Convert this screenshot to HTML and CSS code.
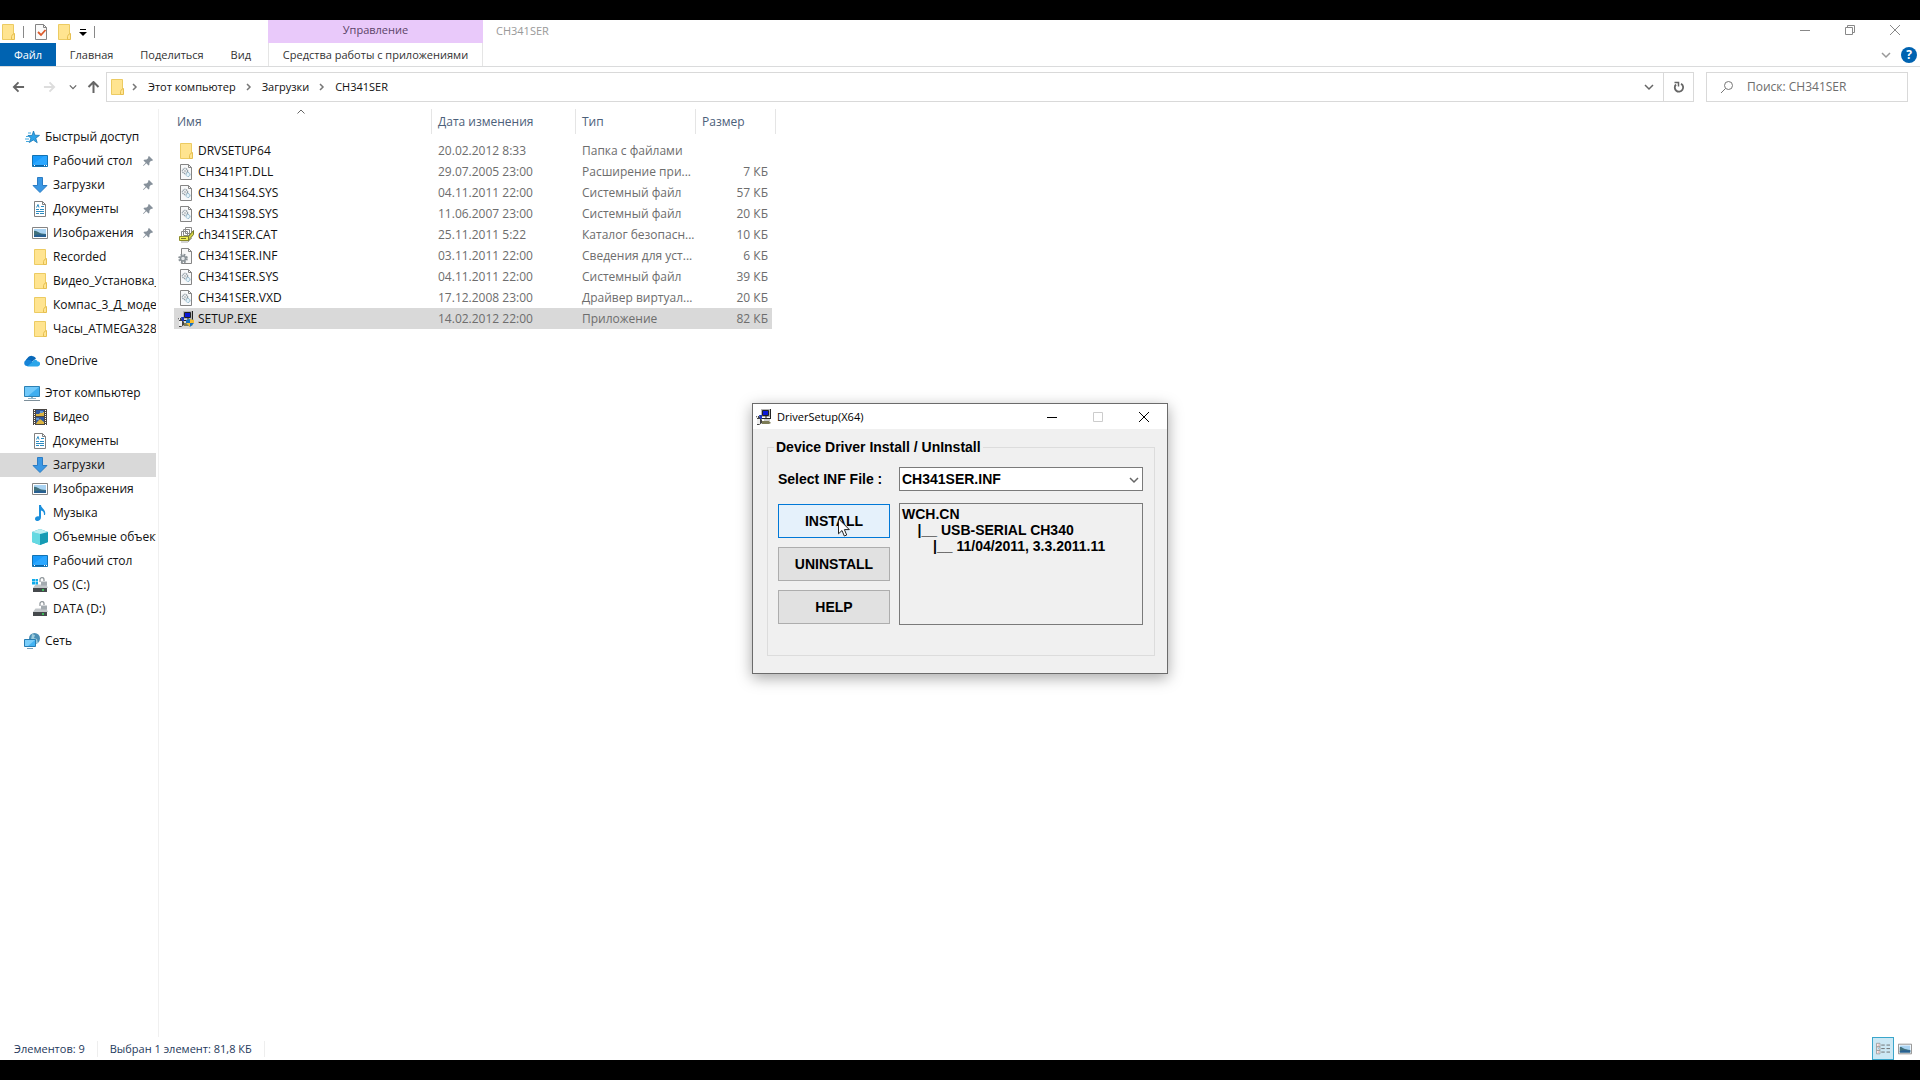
FILE: index.html
```
<!DOCTYPE html>
<html lang="ru">
<head>
  <meta charset="UTF-8">
  <meta name="viewport" content="width=device-width, initial-scale=1.0">
  <title>CH341SER</title>
  <link rel="stylesheet" href="styles.css">
</head>
<body>
  <!-- Набор иконок -->
  <svg class="sprite" aria-hidden="true">
    <symbol id="i-folder" viewBox="0 0 16 16"><path d="M2.5.5h11v15h-11z" fill="#ffe490" stroke="#eccb62"/><path d="M12.500 10.500l2-1v6h-3v-3z" fill="#ffe490" stroke="#e6bf50"/></symbol>
    <symbol id="i-check" viewBox="0 0 16 16"><path d="M2.500.5h8l3 3v12h-11z" fill="#fafafa" stroke="#848484"/><path d="M10.500.5v3h3" fill="none" stroke="#848484"/><path d="M5 8l3 3 4.500-5" fill="none" stroke="#dc5b2c" stroke-width="1.800"/></symbol>
    <symbol id="i-star" viewBox="0 0 16 16"><path d="M9.500 2l1.400 4.200 4.600.2-3.700 2.800 1.400 4.500-3.900-2.700-4 2.500 1.600-4.300-3-2.700 4.200-.1z" fill="#2ea3e8" stroke="#1777b5" stroke-width=".8"/><path d="M4 4h3M2 7.500h3M1 10h4M2 12.500h3" stroke="#43a8df"/></symbol>
    <symbol id="i-desktop" viewBox="0 0 16 16"><path d="M.5 2.500h15v11H.5z" fill="#199bfb" stroke="#1273b3"/><path d="M1 11l11-8h3v9H1z" fill="#2ba7ff"/><path d="M1 12.500h14" stroke="#0b62a5"/><path d="M2 12.500h1M12 12.500h1M14 12.500h1" stroke="#fff"/></symbol>
    <symbol id="i-down" viewBox="0 0 16 16"><path d="M5.500.5h5v8h4.500l-7 7-7-7h4.500z" fill="#3b97e3" stroke="#2b7cc4"/></symbol>
    <symbol id="i-doc" viewBox="0 0 16 16"><path d="M2.500.5h8l3 3v12h-11z" fill="#fff" stroke="#808080"/><path d="M10.500.5v3h3" fill="none" stroke="#808080"/><path d="M4.500 6.500l1.500-3 1 3M9 5.500h3M4 8.500h3M8 8.500h4M4 10.500h8M4 12.500h3M8 12.500h4" fill="none" stroke="#2c8bc0"/></symbol>
    <symbol id="i-pic" viewBox="0 0 16 16"><path d="M.5 2.500h15v11H.5z" fill="#fff" stroke="#858585"/><path d="M2 4h12v8H2z" fill="#a9d3f2"/><path d="M2 6c3-1 4 3 12 3v3H2z" fill="#41717c"/><path d="M2 10.500c4-2 8 0 12-1v2.500H2z" fill="#286092"/></symbol>
    <symbol id="i-cloud" viewBox="0 0 16 16"><path d="M4 12a4 4 0 0 1-.5-7A5 5 0 0 1 12 5.500z" fill="#0868b9"/><path d="M3 13a3 3 0 0 1 .5-6c2-.5 3 .5 5 2l4 4z" fill="#1684d8"/><path d="M3 13.500l5-4c2-4 5-3 5.500-1 4 0 3 5 0 5z" fill="#2ba6ea"/></symbol>
    <symbol id="i-pc" viewBox="0 0 16 16"><path d="M.5 1.500h15v10H.5z" fill="#3faef0" stroke="#2c81b4"/><path d="M1 2h14L4 11H1z" fill="#72c9fa"/><path d="M7 12h2v1.500H7zM4 13h8v1H4z" fill="#8eb2c6"/><path d="M0 15.500h16" stroke="#7d8f9a"/></symbol>
    <symbol id="i-video" viewBox="0 0 16 16"><path d="M1 0h14v16H1z" fill="#4b4743"/><path d="M2.500 1v15M13.500 1v15" stroke="#fff" stroke-dasharray="1 1"/><path d="M4 1h8v6H4zM4 8h8v7H4z" fill="#31589c"/><path d="M4 5h3l2-2h3v4H4zM5 13l3-3 4 3v2H4z" fill="#dbb442"/><path d="M8 2h3v2H8zM4 9h3v2H4z" fill="#6497d3"/></symbol>
    <symbol id="i-music" viewBox="0 0 16 16"><path d="M7 0h2c0 3.500 5.500 4.500 4 10h-1c0-3-1-4-3-4.500V12c0 5-6 5-6 2 0-2 2-3 4-2.500z" fill="#1b8fdc"/></symbol>
    <symbol id="i-cube" viewBox="0 0 16 16"><path d="M8 0l8 3v10l-8 3-8-3V3z" fill="#27b6cc"/><path d="M0 3l8 2v11l-8-3z" fill="#65d9e2"/><path d="M8 5l8-2v10l-8 3z" fill="#159bb4"/><path d="M8 0l8 3-8 2-8-2z" fill="#bceff2"/></symbol>
    <symbol id="i-disk" viewBox="0 0 16 16"><path d="M3.500 7.500h11L16 11H1z" fill="#c2c6c9"/><path d="M1 11h14v4H1z" fill="#45494c"/><path d="M10 13h2" stroke="#38e05b" stroke-width="1.500"/><path d="M8 5V2.500c0-2.500 4-2.500 4 0V4" fill="none" stroke="#8b9296" stroke-width="1.200"/><path d="M9 4.500h6v4H9z" fill="#a4abb0"/></symbol>
    <symbol id="i-os" viewBox="0 0 16 16"><use href="#i-disk"/><path d="M0 2h3v2.500H0zM3.500 2H6v2.500H3.500zM0 5h3v2.500H0zM3.500 5H6v2.500H3.500z" fill="#0fabea"/></symbol>
    <symbol id="i-net" viewBox="0 0 16 16"><circle cx="10.500" cy="5.500" r="5.500" fill="#4b8fb5"/><path d="M8 1l3 1-1 3 3 1 1 4-3 1-4-4z" fill="#9bcbdc"/><path d="M.5 6.500h11v7H.5z" fill="#43b3f3" stroke="#277db3"/><path d="M1 7h10l-7 6H1z" fill="#7bcefa"/><path d="M3 15.500h6" stroke="#759fb8"/></symbol>
    <symbol id="i-pin" viewBox="0 0 10 10"><path d="M6 0l4 4-1 1-1-.3L6.500 6.500 6.300 9 5.500 9.500 3.300 7.300.5 10l-.5-.5 2.700-2.800L.5 4.500 1 3.700l2.500-.2L5.300 2 5 1z" fill="#87919b"/></symbol>
    <symbol id="i-sys" viewBox="0 0 16 16"><path d="M2.500.5h8l3 3v12h-11z" fill="#f8f9fa" stroke="#858585"/><path d="M10.500.5v3h3" fill="none" stroke="#858585"/><circle cx="7" cy="7" r="2.500" fill="#fff" stroke="#8e9aa2" stroke-width="1.500" stroke-dasharray="1.200 .6"/><circle cx="7" cy="7" r=".8" fill="#7e8a92"/><circle cx="10" cy="10.500" r="2" fill="#e5f3fa" stroke="#7ea9c0" stroke-dasharray="1.200 .5"/></symbol>
    <symbol id="i-inf" viewBox="0 0 16 16"><path d="M3.500.5h7l3 3v12h-10z" fill="#f8f8f8" stroke="#858585"/><path d="M10.500.5v3h3" fill="none" stroke="#858585"/><circle cx="5" cy="10.500" r="3.800" fill="none" stroke="#8a9297" stroke-width="2" stroke-dasharray="1.800 1.200"/><circle cx="5" cy="10.500" r="2.500" fill="#e5e8ea" stroke="#8a9297" stroke-width="1.500"/></symbol>
    <symbol id="i-cat" viewBox="0 0 16 16"><path d="M7.500.5h6v6h-6zM5.500 2.500h6v6h-6zM3.500 4.500h6v6h-6z" fill="#fff" stroke="#8a8a8a"/><path d="M1.500 9.500h9v4h-9z" fill="#eeee55" stroke="#8b8b29"/><path d="M10.500 9.500l5-6v4l-5 6z" fill="#d0d044" stroke="#77772a"/><path d="M3 11.500h5" stroke="#77772a"/><path d="M3 15h7l4-4" fill="none" stroke="#aaa"/></symbol>
    <symbol id="i-setup" viewBox="0 0 16 16"><path d="M5 0h10v8H5z" fill="#b5b5b5"/><path d="M6.500 1.500h6v5h-6z" fill="#0a18d8" stroke="#222"/><path d="M14.500 0v9M6 9.500h9M10 7v2" stroke="#222"/><path d="M0 7h3l3 4v3l-3 2H1V9z" fill="#444"/><path d="M1 10h3v5H1zM1 7h1v2H1z" fill="#eee"/><path d="M3 6h3v4H4z" fill="#1b36c0"/><path d="M6 12h7l2 2-2 1H6z" fill="#7c7b55"/><path d="M8 10h6v2H8z" fill="#ccc"/></symbol>
    <symbol id="i-exe" viewBox="0 0 16 16"><use href="#i-setup"/><path d="M8 9l4-1 4 1v3l-4 4-4-4z" fill="#1672c0"/><path d="M12 8l4 1v3h-4zM8 12h4v4z" fill="#f5bd31"/></symbol>
    <symbol id="i-chev" viewBox="0 0 10 10"><path d="M1 3l4 4 4-4" fill="none" stroke="currentColor" stroke-width="1.500"/></symbol>
    <symbol id="i-sep" viewBox="0 0 6 8"><path d="M1 1l3 3-3 3" fill="none" stroke="currentColor" stroke-width="1.500"/></symbol>
    <symbol id="i-left" viewBox="0 0 14 12"><path d="M13 6H2M7 1L2 6l5 5" fill="none" stroke="currentColor" stroke-width="2"/></symbol>
    <symbol id="i-right" viewBox="0 0 14 12"><path d="M1 6h11M7 1l5 5-5 5" fill="none" stroke="currentColor" stroke-width="2"/></symbol>
    <symbol id="i-up" viewBox="0 0 12 12"><path d="M6 12V2M1 6l5-5 5 5" fill="none" stroke="currentColor" stroke-width="2"/></symbol>
    <symbol id="i-min" viewBox="0 0 10 10"><path d="M0 5.500h10" stroke="currentColor"/></symbol>
    <symbol id="i-max" viewBox="0 0 10 10"><path d="M.5.5h9v9h-9z" fill="none" stroke="currentColor"/></symbol>
    <symbol id="i-restore" viewBox="0 0 10 10"><path d="M.5 2.500h7v7h-7zM2.500 2V.5h7v7H8" fill="none" stroke="currentColor"/></symbol>
    <symbol id="i-close" viewBox="0 0 10 10"><path d="M0 0l10 10M10 0L0 10" stroke="currentColor"/></symbol>
  </svg>

  <main class="explorer">
    <header class="titlebar">
      <div class="quick">
        <svg class="icon"><use href="#i-folder"/></svg>
        <span class="bar"></span>
        <button aria-label="Свойства"><svg class="icon"><use href="#i-check"/></svg></button>
        <button aria-label="Новая папка"><svg class="icon"><use href="#i-folder"/></svg></button>
        <button aria-label="Настройка панели"><svg class="tiny" viewBox="0 0 8 8"><path d="M1 1.500h6" stroke="#000"/><path d="M0 4h8L4 8z"/></svg></button>
        <span class="bar"></span>
      </div>
      <div class="context">Управление</div>
      <h1 class="title">CH341SER</h1>
      <div class="win-buttons">
        <button aria-label="Свернуть"><svg class="glyph"><use href="#i-min"/></svg></button>
        <button aria-label="Восстановить"><svg class="glyph"><use href="#i-restore"/></svg></button>
        <button aria-label="Закрыть"><svg class="glyph"><use href="#i-close"/></svg></button>
      </div>
    </header>

    <nav class="tabs">
      <div class="main-tabs">
        <button class="file">Файл</button>
        <button>Главная</button>
        <button>Поделиться</button>
        <button>Вид</button>
      </div>
      <button class="tools">Средства работы с приложениями</button>
      <div class="help">
        <button aria-label="Развернуть ленту"><svg class="glyph"><use href="#i-chev"/></svg></button>
        <button class="ask" aria-label="Справка">?</button>
      </div>
    </nav>

    <div class="address-row">
      <div class="history">
        <button aria-label="Назад"><svg class="arrow"><use href="#i-left"/></svg></button>
        <button class="off" aria-label="Вперед"><svg class="arrow"><use href="#i-right"/></svg></button>
        <button aria-label="Последние"><svg class="tiny"><use href="#i-chev"/></svg></button>
        <button aria-label="Вверх"><svg class="arrow"><use href="#i-up"/></svg></button>
      </div>
      <div class="address">
        <svg class="icon"><use href="#i-folder"/></svg>
        <svg class="sep"><use href="#i-sep"/></svg>
        <a href="#">Этот компьютер</a>
        <svg class="sep"><use href="#i-sep"/></svg>
        <a href="#">Загрузки</a>
        <svg class="sep"><use href="#i-sep"/></svg>
        <a href="#">CH341SER</a>
        <button class="drop" aria-label="Предыдущие расположения"><svg class="glyph"><use href="#i-chev"/></svg></button>
        <button class="refresh" aria-label="Обновить"><svg viewBox="0 0 12 12"><path d="M8 2.800A4.200 4.200 0 1 1 3 3.500" fill="none" stroke="#666" stroke-width="1.800"/><path d="M1.500 1.500h4v4" fill="none" stroke="#666" stroke-width="1.500"/></svg></button>
      </div>
      <label class="search">
        <svg viewBox="0 0 12 12"><circle cx="7.500" cy="4.500" r="4" fill="none" stroke="#777"/><path d="M4.500 7.500L0 12" stroke="#777"/></svg>
        <input type="text" placeholder="Поиск: CH341SER" aria-label="Поиск: CH341SER">
      </label>
    </div>

    <div class="content">
      <aside class="sidebar">
        <a href="#" class="root"><svg class="icon"><use href="#i-star"/></svg><span>Быстрый доступ</span></a>
        <a href="#"><svg class="icon"><use href="#i-desktop"/></svg><span>Рабочий стол</span><svg class="pin"><use href="#i-pin"/></svg></a>
        <a href="#"><svg class="icon"><use href="#i-down"/></svg><span>Загрузки</span><svg class="pin"><use href="#i-pin"/></svg></a>
        <a href="#"><svg class="icon"><use href="#i-doc"/></svg><span>Документы</span><svg class="pin"><use href="#i-pin"/></svg></a>
        <a href="#"><svg class="icon"><use href="#i-pic"/></svg><span>Изображения</span><svg class="pin"><use href="#i-pin"/></svg></a>
        <a href="#"><svg class="icon"><use href="#i-folder"/></svg><span>Recorded</span></a>
        <a href="#"><svg class="icon"><use href="#i-folder"/></svg><span>Видео_Установка_п</span></a>
        <a href="#"><svg class="icon"><use href="#i-folder"/></svg><span>Компас_3_Д_модел</span></a>
        <a href="#"><svg class="icon"><use href="#i-folder"/></svg><span>Часы_ATMEGA328_</span></a>
        <a href="#" class="root"><svg class="icon"><use href="#i-cloud"/></svg><span>OneDrive</span></a>
        <a href="#" class="root"><svg class="icon"><use href="#i-pc"/></svg><span>Этот компьютер</span></a>
        <a href="#"><svg class="icon"><use href="#i-video"/></svg><span>Видео</span></a>
        <a href="#"><svg class="icon"><use href="#i-doc"/></svg><span>Документы</span></a>
        <a href="#" class="current"><svg class="icon"><use href="#i-down"/></svg><span>Загрузки</span></a>
        <a href="#"><svg class="icon"><use href="#i-pic"/></svg><span>Изображения</span></a>
        <a href="#"><svg class="icon"><use href="#i-music"/></svg><span>Музыка</span></a>
        <a href="#"><svg class="icon"><use href="#i-cube"/></svg><span>Объемные объекты</span></a>
        <a href="#"><svg class="icon"><use href="#i-desktop"/></svg><span>Рабочий стол</span></a>
        <a href="#"><svg class="icon"><use href="#i-os"/></svg><span>OS (C:)</span></a>
        <a href="#"><svg class="icon"><use href="#i-disk"/></svg><span>DATA (D:)</span></a>
        <a href="#" class="root"><svg class="icon"><use href="#i-net"/></svg><span>Сеть</span></a>
      </aside>

      <section class="files">
        <table>
          <thead>
            <tr>
              <th class="col-name">Имя<svg class="sort" viewBox="0 0 8 5"><path d="M.5 4.500L4 1l3.500 3.500" fill="none" stroke="#666"/></svg></th>
              <th class="col-date">Дата изменения</th>
              <th class="col-type">Тип</th>
              <th class="col-size">Размер</th>
            </tr>
          </thead>
          <tbody>
            <tr><td><svg class="icon"><use href="#i-folder"/></svg>DRVSETUP64</td><td>20.02.2012 8:33</td><td>Папка с файлами</td><td></td></tr>
            <tr><td><svg class="icon"><use href="#i-sys"/></svg>CH341PT.DLL</td><td>29.07.2005 23:00</td><td>Расширение при...</td><td>7 КБ</td></tr>
            <tr><td><svg class="icon"><use href="#i-sys"/></svg>CH341S64.SYS</td><td>04.11.2011 22:00</td><td>Системный файл</td><td>57 КБ</td></tr>
            <tr><td><svg class="icon"><use href="#i-sys"/></svg>CH341S98.SYS</td><td>11.06.2007 23:00</td><td>Системный файл</td><td>20 КБ</td></tr>
            <tr><td><svg class="icon"><use href="#i-cat"/></svg>ch341SER.CAT</td><td>25.11.2011 5:22</td><td>Каталог безопасн...</td><td>10 КБ</td></tr>
            <tr><td><svg class="icon"><use href="#i-inf"/></svg>CH341SER.INF</td><td>03.11.2011 22:00</td><td>Сведения для уст...</td><td>6 КБ</td></tr>
            <tr><td><svg class="icon"><use href="#i-sys"/></svg>CH341SER.SYS</td><td>04.11.2011 22:00</td><td>Системный файл</td><td>39 КБ</td></tr>
            <tr><td><svg class="icon"><use href="#i-sys"/></svg>CH341SER.VXD</td><td>17.12.2008 23:00</td><td>Драйвер виртуал...</td><td>20 КБ</td></tr>
            <tr class="selected"><td><svg class="icon"><use href="#i-exe"/></svg>SETUP.EXE</td><td>14.02.2012 22:00</td><td>Приложение</td><td>82 КБ</td></tr>
          </tbody>
        </table>
      </section>
    </div>

    <footer class="status">
      <span>Элементов: 9</span>
      <span>Выбран 1 элемент: 81,8 КБ</span>
      <div class="views">
        <button class="on" aria-label="Таблица"><svg viewBox="0 0 16 14"><path d="M.5.5h4v4h-4zM.5 4.500h4v4h-4zM.5 8.500h4v4h-4z" fill="#fff" stroke="#999"/><path d="M6 2.500h4M12 2.500h4M6 6.500h4M12 6.500h4M6 10.500h4M12 10.500h4" stroke="#666"/><path d="M2 2.500h1M2 10.500h1" stroke="#c33"/><path d="M2 6.500h1" stroke="#38c"/></svg></button>
        <button aria-label="Крупные значки"><svg><use href="#i-pic"/></svg></button>
      </div>
    </footer>
  </main>

  <!-- Окно установки драйвера -->
  <section class="dialog" role="dialog" aria-labelledby="dlgTitle">
    <header class="dialog-title">
      <svg class="icon"><use href="#i-setup"/></svg>
      <h2 id="dlgTitle">DriverSetup(X64)</h2>
      <button aria-label="Свернуть"><svg class="glyph"><use href="#i-min"/></svg></button>
      <button disabled aria-label="Развернуть"><svg class="glyph"><use href="#i-max"/></svg></button>
      <button aria-label="Закрыть"><svg class="glyph"><use href="#i-close"/></svg></button>
    </header>
    <fieldset>
      <legend>Device Driver Install / UnInstall</legend>
      <div class="form">
        <label for="inf">Select INF File :</label>
        <div class="combo">
          <select id="inf"><option>CH341SER.INF</option></select>
          <svg class="combo-arrow"><use href="#i-chev"/></svg>
        </div>
        <div class="actions">
          <button class="hot">INSTALL</button>
          <button>UNINSTALL</button>
          <button>HELP</button>
        </div>
        <textarea readonly aria-label="Driver info">WCH.CN
    |__ USB-SERIAL CH340
        |__ 11/04/2011, 3.3.2011.11</textarea>
      </div>
    </fieldset>
    <svg class="cursor" viewBox="0 0 12 19"><path d="M.5.8v15l3.500-3.300 2.300 5.500 2.400-1-2.300-5.400h4.900z" fill="#fff" stroke="#222"/></svg>
  </section>
</body>
</html>
```
FILE: styles.css
```
* { box-sizing: border-box; margin: 0; padding: 0; }
body {
  display: flex;
  height: 100vh;
  padding: 20px 0;
  background: #000;
  color: #111;
  font: 12px/16px "Open Sans", sans-serif;
  overflow: hidden;
}
button { background: none; border: none; font: inherit; color: inherit; }
button, a { display: flex; align-items: center; justify-content: center; }
a { color: inherit; text-decoration: none; }
svg { flex: none; display: block; }

.sprite { position: absolute; width: 0; height: 0; }
.icon { width: 16px; height: 16px; }
.glyph { width: 10px; height: 10px; }
.tiny { width: 8px; height: 8px; }

.explorer { flex: 1; min-width: 0; display: flex; flex-direction: column; background: #fff; }

/* Заголовок */
.titlebar { display: flex; height: 23px; font-size: 11px; }
.quick { display: flex; align-items: center; width: 268px; gap: 7px; }
.quick .bar { width: 1px; height: 12px; background: #888; }
.quick .bar + button { margin-left: 2px; }
.context { width: 215px; padding-top: 2px; background: #e9c9fa; color: #5b4468; text-align: center; }
.title { flex: 1; padding: 3px 13px; font-size: 11px; font-weight: 400; color: #999; }
.win-buttons { display: flex; padding-right: 3px; color: #888; }
.win-buttons button { width: 45px; height: 20px; }

/* Вкладки ленты */
.tabs { display: flex; height: 24px; border-bottom: 1px solid #dadbdc; font-size: 11px; color: #333; }
.main-tabs { display: flex; width: 268px; justify-content: space-between; padding-right: 4px; }
.main-tabs button { padding: 0 13px; }
.main-tabs .file { flex: none; width: 56px; background: #0063b1; color: #fff; }
.tabs .tools { width: 215px; border: solid #e5e5e5; border-width: 0 1px; white-space: nowrap; }
.help { display: flex; align-items: center; gap: 10px; margin-left: auto; padding-right: 3px; color: #999; }
.help .ask { width: 16px; height: 16px; border-radius: 50%; background: #0063b1; color: #fff; font-size: 12px; font-weight: 700; }

/* Адресная строка */
.address-row { display: flex; height: 40px; padding: 5px 12px 5px 0; }
.history { display: flex; align-items: center; gap: 10px; width: 106px; padding-left: 12px; color: #666; }
.history .off { margin: 0 3px 0 8px; color: #ddd; }
.arrow { width: 13px; height: 12px; }
.address { flex: 1; display: flex; align-items: center; border: 1px solid #d9d9d9; padding-left: 2px; font-size: 11px; color: #111; }
.address a { margin: 0 10px; }
.sep { width: 6px; height: 8px; color: #777; }
.address > .icon { margin-right: 7px; }
.drop { width: 28px; margin-left: auto; color: #666; }
.refresh { align-self: stretch; width: 30px; border-left: 1px solid #d9d9d9; }
.refresh svg { width: 12px; height: 12px; }
.search { display: flex; align-items: center; gap: 14px; width: 202px; margin-left: 12px; padding: 0 14px; border: 1px solid #d9d9d9; }
.search svg { width: 12px; height: 12px; }
.search input { flex: 1; min-width: 0; border: none; outline: none; font: inherit; }
.search input::placeholder { color: #6d6d6d; opacity: 1; }

.content { flex: 1; display: flex; min-height: 0; }

/* Дерево папок */
.sidebar { width: 159px; margin-top: 2px; padding: 16px 2px 0 0; border-right: 1px solid #f0f0f0; }
.sidebar a { justify-content: flex-start; gap: 5px; height: 24px; padding-left: 32px; white-space: nowrap; overflow: hidden; }
.sidebar .root { padding-left: 24px; margin-top: 8px; }
.sidebar .root:first-child { margin-top: 0; }
.sidebar .current { background: #d9d9d9; }
.sidebar .pin { width: 10px; height: 10px; margin: 0 3px 0 auto; }

/* Список файлов */
.files { padding: 2px 0 0 15px; }
table { border-collapse: collapse; table-layout: fixed; width: 598px; }
th { position: relative; height: 25px; padding-left: 6px; text-align: left; font-weight: 400; color: #4c607a; }
th::after { content: ""; position: absolute; top: 0; right: 0; width: 1px; height: 100%; background: #e5e5e5; }
th:last-child::after { right: -4px; }
.col-name { width: 258px; padding-left: 3px; }
.col-date { width: 144px; }
.col-type { width: 120px; }
.sort { position: absolute; top: 0; left: calc(50% - 6px); width: 8px; height: 5px; }
tbody::before { content: ""; display: block; height: 6px; }
td { height: 21px; padding-left: 6px; color: #6d6d6d; white-space: nowrap; }
td:first-child { display: flex; align-items: center; gap: 4px; padding-left: 4px; color: #111; }
td:last-child { text-align: right; padding-right: 4px; }
.selected { background: #d9d9d9; }

/* Строка состояния */
.status { display: flex; align-items: center; height: 23px; padding-left: 14px; font-size: 11px; color: #1e395b; }
.status span { padding-right: 12px; margin-right: 12px; border-right: 1px solid #eee; }
.views { display: flex; margin-left: auto; padding-right: 4px; }
.views button { width: 22px; height: 23px; }
.views .on { background: #cce8f4; border: 1px solid #3aa6cb; }
.views svg { width: 14px; height: 14px; }

/* Диалог */
.dialog {
  position: absolute;
  top: 403px;
  left: calc(50% - 208px);
  width: 416px;
  padding-bottom: 17px;
  background: #f0f0f0;
  border: 1px solid #6b6b6b;
  box-shadow: 0 4px 14px rgba(0,0,0,0.35);
  color: #000;
}
.dialog-title { display: flex; align-items: center; height: 25px; padding-left: 3px; background: #fff; }
.dialog-title h2 { flex: 1; padding-left: 5px; font-size: 11px; font-weight: 400; }
.dialog-title button { width: 46px; height: 24px; }
.dialog-title button:disabled { color: #ccc; }
fieldset { margin: 10px 12px 0 14px; padding: 0 11px 30px 10px; border: 1px solid #dcdcdc; font: bold 14px/16px "Liberation Sans", sans-serif; }
legend { margin-left: -4px; padding: 0 2px; }
.form { display: grid; grid-template-columns: 112px 1fr; gap: 12px 9px; padding-top: 12px; }
.form label { align-self: center; white-space: nowrap; }
.combo { position: relative; }
.combo select { width: 100%; height: 24px; padding: 0 2px; appearance: none; background: #fff; border: 1px solid #7a7a7a; border-radius: 0; font: inherit; color: #000; }
.combo-arrow { position: absolute; top: 8px; right: 4px; width: 10px; height: 10px; color: #666; pointer-events: none; }
.actions { display: flex; flex-direction: column; gap: 9px; padding-top: 1px; }
.actions button { height: 34px; background: #e1e1e1; border: 1px solid #adadad; }
.actions .hot { background: #e5f1fb; border-color: #0078d7; }
textarea { height: 122px; padding: 2px; resize: none; outline: none; background: #f0f0f0; border: 1px solid #7a7a7a; font: inherit; color: #000; white-space: pre; overflow: hidden; }
.cursor { position: absolute; left: 85px; top: 114px; width: 12px; height: 19px; }
```
